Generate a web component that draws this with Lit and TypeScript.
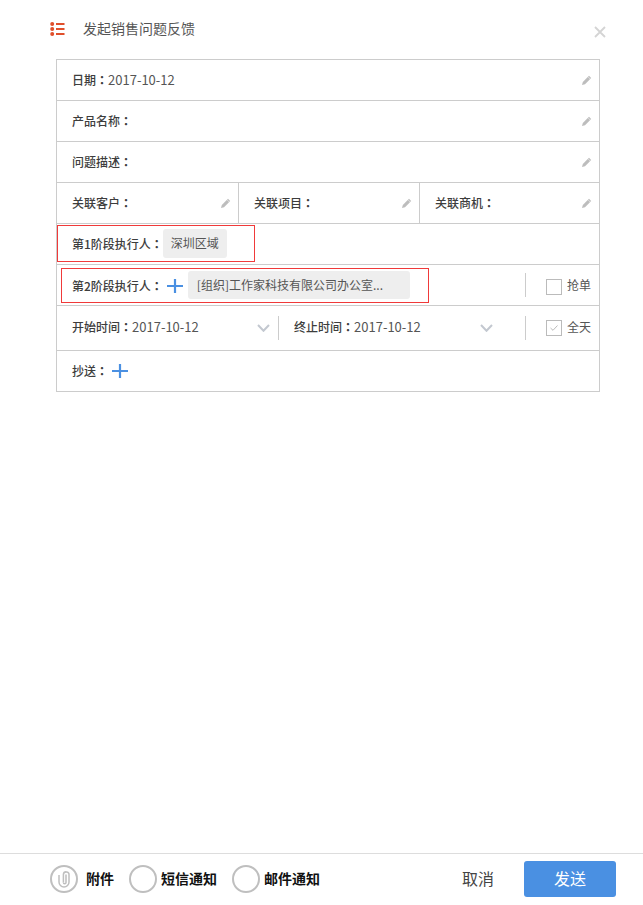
import { LitElement, html, css } from "lit";
import { customElement } from "lit/decorators.js";

const pencil = html`<svg class="pencil" width="10" height="10" viewBox="0 0 10 10"><path d="M0 10 L0.8 7 L7 0.8 L9.2 3 L3 9.2 Z" fill="#bdbdbd"/><path d="M6 1.8 L8.2 4" stroke="#fff" stroke-width=".5" fill="none"/></svg>`;
const plus = html`<svg class="plus" width="16" height="14" viewBox="0 0 16 14"><path d="M0 7h16M8 0v14" stroke="#4a90e2" stroke-width="2.2" fill="none"/></svg>`;
const chev = html`<svg class="chev" width="13" height="8" viewBox="0 0 13 8"><path d="M1 1 L6.5 6.8 L12 1" stroke="#c3c8d0" stroke-width="2" fill="none"/></svg>`;
const colon = html`<span class="co">：</span>`;

@customElement("app-root")
export class AppRoot extends LitElement {
  static styles = css`
    :host { display: block; width: 643px; height: 905px; background: #fff; color: #444; font: 12px/1.4 "Noto Sans CJK SC", "Liberation Sans", sans-serif; }
    .page { height: 905px; display: flex; flex-direction: column; }
    .head { height: 59px; display: flex; align-items: flex-start; padding: 20px 37px 0 50px; box-sizing: border-box; flex: none; }
    .head .listicon { margin-top: 2px; }
    .head .title { margin-left: 18px; font-size: 14px; line-height: 16px; color: #555; }
    .head .close { margin-left: auto; margin-top: 6px; }
    .table { margin-left: 56px; width: 544px; box-sizing: border-box; border: 1px solid #cccccc; border-bottom: 0; }
    .row { display: flex; align-items: center; height: 41px; box-sizing: border-box; border-bottom: 1px solid #cccccc; }
    .row.tall { height: 45px; }
    .cell { display: flex; align-items: center; height: 100%; box-sizing: border-box; padding: 0 12px 0 15px; flex: 1; min-width: 0; }
    .cell + .cell { border-left: 1px solid #cccccc; }
    .c1, .c2 { flex: 0 0 181px; }
    .pencil { margin-left: auto; margin-right: -5px; }
    b { font-weight: 500; color: #3d3d3d; }
    .co { font-family: "Noto Sans CJK TC", "Noto Sans CJK SC", sans-serif; font-weight: 700; }
    .val { color: #555; font-size: 13px; }
    .redbox { display: flex; align-items: center; box-sizing: border-box; border: 1px solid #f03a3a; }
    .r1 { width: 198px; height: 37px; margin: 1px 0 3px 0; padding-left: 14px; }
    .r1 b, .r2 b { position: relative; top: 1px; }
    .r2 { width: 368px; height: 35px; margin-left: 4px; padding-left: 10px; }
    .tag { background: #eeeeee; border-radius: 3px; color: #555; display: flex; align-items: center; }
    .t1 { width: 64px; height: 29px; padding-left: 8px; box-sizing: border-box; }
    .t2 { width: 222px; height: 28px; padding-left: 9px; box-sizing: border-box; margin-left: 5px; }
    .r2 .plus { margin-left: 4px; margin-top: 2px; }
    .vsep { width: 1px; height: 24px; background: #cccccc; flex: none; }
    .check { display: flex; align-items: center; gap: 5px; color: #555; margin-left: 20px; }
    .tx { margin-bottom: 2px; }
    .grab { margin-right: 8px; }
    .grab .box { margin-top: 3px; }
    .grab .tx { margin-bottom: 0; }
    .box { width: 14px; height: 14px; border: 1px solid #bbb; display: flex; align-items: center; justify-content: center; flex: none; }
    .time { padding-left: 15px; display: flex; align-items: center; flex: none; box-sizing: border-box; padding-bottom: 2px; }
    .chev { margin-left: auto; margin-top: 2px; }
    .start { width: 221px; padding-right: 8px; }
    .end { width: 246px; padding-right: 32px; }
    .cc { padding-left: 15px; display: flex; align-items: center; }
    .cc .plus { margin-left: 4px; margin-top: 1px; }
    .spacer { flex: 1; }
    .foot { height: 52px; box-sizing: border-box; border-top: 1px solid #dddddd; display: flex; align-items: center; padding: 0 27px 1px 50px; flex: none; color: #111; }
    .foot b { font-size: 14px; font-weight: 700; color: #111; white-space: nowrap; }
    .ring { width: 28px; height: 28px; border-radius: 50%; border: 2.5px solid #bfbfbf; box-sizing: border-box; display: flex; align-items: center; justify-content: center; flex: none; }
    .a { margin-left: 8px; margin-right: 15px; }
    .s { margin-left: 4px; margin-right: 15px; }
    .m { margin-left: 4px; }
    .cancel { margin-left: auto; margin-bottom: 2px; font-size: 16px; color: #444; }
    .send { margin-left: 30px; width: 92px; height: 36px; box-sizing: border-box; padding-bottom: 2px; border-radius: 3px; background: #4a90e2; color: #fff; font-size: 16px; display: flex; align-items: center; justify-content: center; }
  `;

  render() {
    return html`<div class="page">
      <div class="head">
        <svg class="listicon" width="15" height="14" viewBox="0 0 15 14" fill="#e04f2b">
          <circle cx="2.2" cy="2" r="2"/><circle cx="2.2" cy="7" r="2"/><circle cx="2.2" cy="12" r="2"/>
          <rect x="6" y="1" width="8.5" height="2"/><rect x="6" y="6" width="8.5" height="2"/><rect x="6" y="11" width="8.5" height="2"/>
        </svg>
        <span class="title">发起销售问题反馈</span>
        <svg class="close" width="12" height="12" viewBox="0 0 12 12"><path d="M1 1 L11 11 M11 1 L1 11" stroke="#d4d4d4" stroke-width="1.8" fill="none"/></svg>
      </div>
      <div class="table">
        <div class="row"><div class="cell"><b>日期${colon}</b><span class="val">2017-10-12</span>${pencil}</div></div>
        <div class="row"><div class="cell"><b>产品名称${colon}</b>${pencil}</div></div>
        <div class="row"><div class="cell"><b>问题描述${colon}</b>${pencil}</div></div>
        <div class="row">
          <div class="cell c1"><b>关联客户${colon}</b>${pencil}</div>
          <div class="cell c2"><b>关联项目${colon}</b>${pencil}</div>
          <div class="cell c3"><b>关联商机${colon}</b>${pencil}</div>
        </div>
        <div class="row"><div class="redbox r1"><b>第1阶段执行人${colon}</b><span class="tag t1">深圳区域</span></div></div>
        <div class="row">
          <div class="redbox r2"><b>第2阶段执行人${colon}</b>${plus}<span class="tag t2">[组织]工作家科技有限公司办公室...</span></div>
          <div class="spacer"></div>
          <div class="vsep"></div>
          <div class="check grab"><span class="box"></span><span class="tx">抢单</span></div>
        </div>
        <div class="row tall">
          <div class="time start"><b>开始时间${colon}</b><span class="val">2017-10-12</span>${chev}</div>
          <div class="vsep"></div>
          <div class="time end"><b>终止时间${colon}</b><span class="val">2017-10-12</span>${chev}</div>
          <div class="vsep"></div>
          <div class="check"><span class="box"><svg width="10" height="8" viewBox="0 0 10 8"><path d="M1.5 4 L4 6.3 L8.5 1.5" stroke="#bbb" stroke-width="1" fill="none"/></svg></span><span class="tx">全天</span></div>
        </div>
        <div class="row"><div class="cc"><b>抄送${colon}</b>${plus}</div></div>
      </div>
      <div class="spacer"></div>
      <div class="foot">
        <span class="ring"><svg width="12" height="18" viewBox="0 0 12 18" fill="none" stroke="#bfbfbf" stroke-width="1.5"><path d="M1 5 V12 A5 5 0 0 0 11 12 V5 A2.8 2.8 0 0 0 5.4 4.4 V12.5"/><path d="M8 4.5 V12.5 A1.3 1.3 0 0 1 5.4 12.5"/></svg></span>
        <b class="a">附件</b>
        <span class="ring"></span><b class="s">短信通知</b>
        <span class="ring"></span><b class="m">邮件通知</b>
        <span class="cancel">取消</span>
        <span class="send">发送</span>
      </div>
    </div>`;
  }
}
